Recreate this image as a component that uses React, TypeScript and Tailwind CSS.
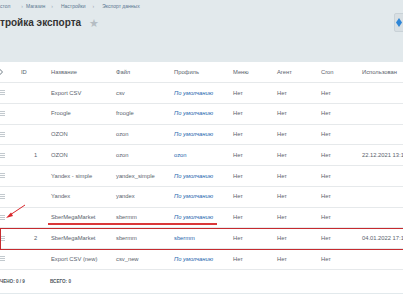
const rows = [
  { id: "", name: "Export CSV", file: "csv", profile: "По умолчанию", def: true, used: "" },
  { id: "", name: "Froogle", file: "froogle", profile: "По умолчанию", def: true, used: "" },
  { id: "", name: "OZON", file: "ozon", profile: "По умолчанию", def: true, used: "" },
  { id: "1", name: "OZON", file: "ozon", profile: "ozon", def: false, used: "22.12.2021 13:1" },
  { id: "", name: "Yandex - simple", file: "yandex_simple", profile: "По умолчанию", def: true, used: "" },
  { id: "", name: "Yandex", file: "yandex", profile: "По умолчанию", def: true, used: "" },
  { id: "", name: "SberMegaMarket", file: "sbermm", profile: "По умолчанию", def: true, used: "" },
  { id: "2", name: "SberMegaMarket", file: "sbermm", profile: "sbermm", def: false, used: "04.01.2022 17:1" },
  { id: "", name: "Export CSV (new)", file: "csv_new", profile: "По умолчанию", def: true, used: "" },
];

const cols = "grid grid-cols-[21px_30px_65px_58px_59px_44px_44px_41px_1fr] items-center";

function Burger() {
  return (
    <svg width="7" height="5" viewBox="0 0 7 5" className="-ml-[2px]">
      <path d="M0 0.5H7M0 2.5H7M0 4.5H7" stroke="#b3bbc1" strokeWidth="0.8" />
    </svg>
  );
}

export default function App() {
  return (
    <div className="relative w-[403px] h-[294px] overflow-hidden bg-[#e2e9ec] font-['Liberation_Sans',Arial,sans-serif] text-[#59626c]">
      {/* breadcrumbs */}
      <div className="h-[14px] flex items-center text-[5px] text-[#5b7790]">
        <span>стол</span>
        <span className="ml-[11px] text-[#9aa6b0]">›</span>
        <span className="ml-[3px]">Магазин</span>
        <span className="ml-[6px] text-[#9aa6b0]">›</span>
        <span className="ml-[8px]">Настройки</span>
        <span className="ml-[7px] text-[#9aa6b0]">›</span>
        <span className="ml-[8px]">Экспорт данных</span>
      </div>

      {/* title */}
      <div className="h-[18px] flex items-center">
        <h1 className="text-[10px] font-bold text-[#333] leading-none">тройка экспорта</h1>
        <span className="ml-[8px] text-[11px] text-[#b5bdc3] leading-none">★</span>
        <div className="ml-auto -mr-[10px] mt-[-2px] w-[19px] h-[19px] rounded-[2px] bg-[#d8dfe3] border border-[#c9d2d7] flex items-center pl-[1px]">
          <svg width="6" height="9" viewBox="0 0 6 9">
            <path d="M3 0L6 4.5L3 9L0 4.5Z" fill="#2f86d6" />
          </svg>
        </div>
      </div>

      {/* table */}
      <div className="mt-[30px] bg-white text-[5.8px]">
        <div className={`${cols} h-[21px] border-b border-[#e6e9eb]`}>
          <svg width="6" height="6" viewBox="0 0 6 6" className="-ml-[3px]">
            <circle cx="3" cy="3" r="2" fill="none" stroke="#8b959d" strokeWidth="0.9" />
            <path d="M3 0V1M3 5V6M0 3H1M5 3H6" stroke="#8b959d" strokeWidth="0.9" />
          </svg>
          <span>ID</span>
          <span>Название</span>
          <span>Файл</span>
          <span>Профиль</span>
          <span>Меню</span>
          <span>Агент</span>
          <span>Cron</span>
          <span className="whitespace-nowrap">Использован</span>
        </div>
        {rows.map((r, i) => (
          <div key={i} className={`${cols} h-[20.75px] border-b border-[#e6e9eb]`}>
            <Burger />
            <span className="pl-[13px]">{r.id}</span>
            <span className="whitespace-nowrap">{r.name}</span>
            <span>{r.file}</span>
            <span className={`text-[#2466ad] whitespace-nowrap ${r.def ? "italic" : ""}`}>{r.profile}</span>
            <span>Нет</span>
            <span>Нет</span>
            <span>Нет</span>
            <span className="whitespace-nowrap">{r.used}</span>
          </div>
        ))}
        <div className="h-[23px] flex items-center pt-[2px] text-[4.6px] font-bold text-[#4c5560] uppercase">
          <span>чено: 0 / 9</span>
          <span className="ml-[25px]">всего: 0</span>
        </div>
      </div>

      {/* annotations */}
      <svg className="absolute left-0 top-[200px]" width="30" height="22" viewBox="0 0 30 22">
        <path d="M25 5L10 15" stroke="#d9262b" strokeWidth="1" />
        <path d="M6 18L11 12.5L13 16Z" fill="#d9262b" />
      </svg>
      <div className="absolute left-[48px] top-[223px] w-[169px] h-[1.5px] bg-[#d9383a]" />
      <div className="absolute left-0 top-[228px] w-[410px] h-[22px] border-[1.5px] border-[#c62b2f]" />
    </div>
  );
}
